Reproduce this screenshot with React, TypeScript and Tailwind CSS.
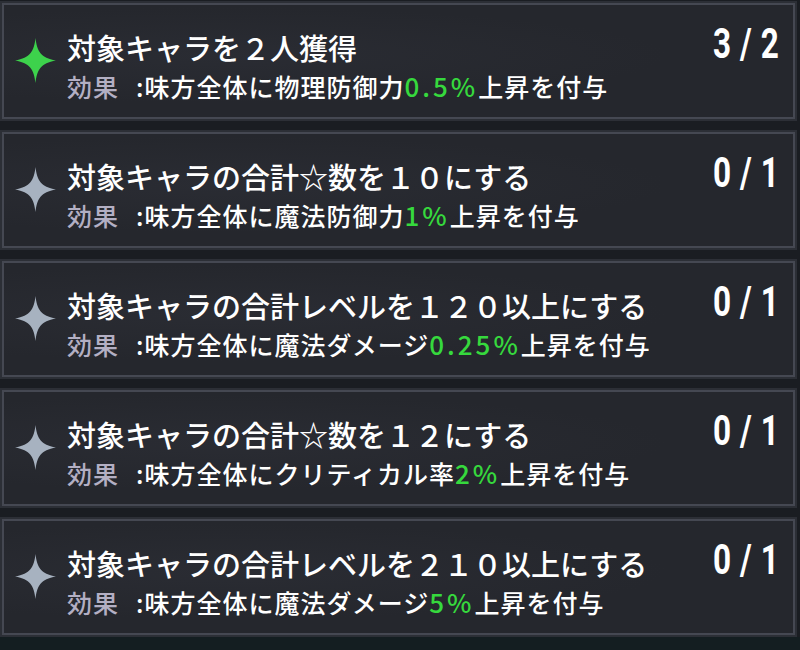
import React from "react";

type Row = {
  title: string;
  pre: string;
  val: string;
  count: [string, string];
  done?: boolean;
};

const rows: Row[] = [
  { title: "対象キャラを２人獲得", pre: "味方全体に物理防御力", val: "0.5%", count: ["3", "2"], done: true },
  { title: "対象キャラの合計☆数を１０にする", pre: "味方全体に魔法防御力", val: "1%", count: ["0", "1"] },
  { title: "対象キャラの合計レベルを１２０以上にする", pre: "味方全体に魔法ダメージ", val: "0.25%", count: ["0", "1"] },
  { title: "対象キャラの合計☆数を１２にする", pre: "味方全体にクリティカル率", val: "2%", count: ["0", "1"] },
  { title: "対象キャラの合計レベルを２１０以上にする", pre: "味方全体に魔法ダメージ", val: "5%", count: ["0", "1"] },
];

function Star({ color }: { color: string }) {
  return (
    <svg width="41" height="45" viewBox="0 0 40 44" className="shrink-0">
      <path
        d="M20 0 C21.5 13 25 19.5 40 22 C25 24.5 21.5 31 20 44 C18.5 31 15 24.5 0 22 C15 19.5 18.5 13 20 0 Z"
        fill={color}
      />
    </svg>
  );
}

function Card({ r }: { r: Row }) {
  return (
    <div className="h-[120px] p-[2px] bg-[#2c2f36]">
      <div className="h-full border-2 border-[#454852] bg-[radial-gradient(ellipse_at_28%_45%,#2a2c33_0%,#25272d_55%)] flex items-start">
        <div className="ml-[11px] mt-[33px]">
          <Star color={r.done ? "#3dd24c" : "#a7b2c0"} />
        </div>
        <div className="ml-[11px] flex flex-col">
          <div
            className="mt-[24px] h-[36px] leading-[36px] text-[29px] font-medium text-white whitespace-nowrap"
            style={{ fontFamily: '"Noto Sans CJK JP", sans-serif' }}
          >
            {r.title}
          </div>
          <div
            className="mt-[6px] h-[30px] leading-[30px] text-[25px] tracking-[1px] font-medium text-white whitespace-nowrap flex"
            style={{ fontFamily: '"Noto Sans CJK JP", sans-serif' }}
          >
            <span className="text-[#b3afc3]">効果</span>
            <span className="ml-[17px]">:</span>
            <span>{r.pre}</span>
            <span className="text-[#36d93d] text-[26px] tracking-[3px]">{r.val}</span>
            <span>上昇を付与</span>
          </div>
        </div>
        <div
          className="ml-auto mr-[14px] mt-[18px] h-[42px] leading-[42px] text-[42px] font-bold text-white flex gap-[12px] scale-x-[0.75] origin-right"
          style={{ fontFamily: 'Roboto, "Liberation Sans", sans-serif' }}
        >
          <span>{r.count[0]}</span>
          <span>/</span>
          <span>{r.count[1]}</span>
        </div>
      </div>
    </div>
  );
}

export default function App() {
  return (
    <div className="w-[800px] h-[650px] bg-[#1a1d22] flex flex-col overflow-hidden">
      <div className="pt-[1px] pr-[3px] flex flex-col gap-[9px]">
        {rows.map((r, i) => (
          <Card key={i} r={r} />
        ))}
      </div>
      <div className="flex-1 bg-[#141e21]" />
    </div>
  );
}
